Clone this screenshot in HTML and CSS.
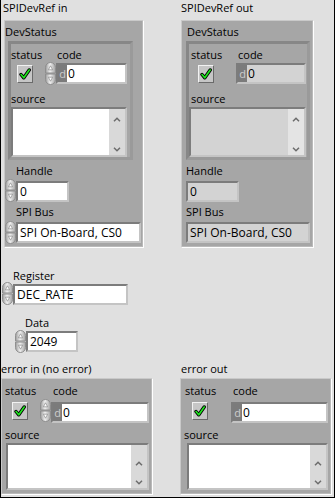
FILE: index.html
```html
<!DOCTYPE html>
<html lang="en">
<head>
    <meta charset="UTF-8">
    <title>SPI Write Register</title>
    <link rel="stylesheet" href="styles.css">
</head>
<body>
    <svg class="defs" width="0" height="0">
        <defs>
            <linearGradient id="spin-grad" x1="0" x2="1" y1="0" y2="0">
                <stop offset="0" stop-color="#9a9a9a"/>
                <stop offset="0.45" stop-color="#f0f0f0"/>
                <stop offset="1" stop-color="#a2a2a2"/>
            </linearGradient>
            <symbol id="spin" viewBox="0 0 11 23">
                <path d="M0.5 11V5.5a5 5 0 0 1 10 0V11z" fill="url(#spin-grad)" stroke="#8e8e8e"/>
                <path d="M0.5 12v5.5a5 5 0 0 0 10 0V12z" fill="url(#spin-grad)" stroke="#8e8e8e"/>
                <path d="M5.5 3.8 7.6 7.8H3.4z" fill="#fff" stroke="#888" stroke-width="0.7"/>
                <path d="M5.5 19.2 7.6 15.2H3.4z" fill="#fff" stroke="#888" stroke-width="0.7"/>
            </symbol>
            <symbol id="check" viewBox="0 0 12 12">
                <polyline points="2,6.5 4.8,9.8 10.2,2" fill="none" stroke="#000" stroke-width="3.4" stroke-linecap="round" stroke-linejoin="round"/>
                <polyline points="2,6.5 4.8,9.8 10.2,2" fill="none" stroke="#1ee81e" stroke-width="1.6" stroke-linecap="round" stroke-linejoin="round"/>
            </symbol>
            <symbol id="chev-up" viewBox="0 0 8 5">
                <polyline points="1,4.2 4,1.2 7,4.2" fill="none" stroke="#6c6c6c" stroke-width="1.5"/>
            </symbol>
            <symbol id="chev-down" viewBox="0 0 8 5">
                <polyline points="1,0.8 4,3.8 7,0.8" fill="none" stroke="#6c6c6c" stroke-width="1.5"/>
            </symbol>
        </defs>
    </svg>

    <div class="top-row">
        <div class="ref-in">
            <div class="lbl">SPIDevRef in</div>
            <div class="cluster">
                <div class="lbl dev-lbl">DevStatus</div>
                <div class="inner">
                    <div class="err-row">
                        <div class="st-col">
                            <div class="lbl">status</div>
                            <div class="st-btn"><svg width="12" height="12"><use href="#check"/></svg></div>
                        </div>
                        <div class="code-col">
                            <div class="lbl">code</div>
                            <div class="num-row">
                                <svg class="spin"><use href="#spin"/></svg>
                                <div class="field num code-field"><span class="radix">d</span>0</div>
                            </div>
                        </div>
                    </div>
                    <div class="lbl src-lbl">source</div>
                    <div class="src">
                        <div class="txt"></div>
                        <div class="sb">
                            <svg width="8" height="5"><use href="#chev-up"/></svg>
                            <svg width="8" height="5"><use href="#chev-down"/></svg>
                        </div>
                    </div>
                </div>
                <div class="lbl sub-lbl handle-lbl">Handle</div>
                <div class="row handle-row">
                    <svg class="spin"><use href="#spin"/></svg>
                    <div class="field handle-field">0</div>
                </div>
                <div class="lbl sub-lbl bus-lbl">SPI Bus</div>
                <div class="row bus-row">
                    <svg class="spin"><use href="#spin"/></svg>
                    <div class="field bus-field">SPI On-Board, CS0</div>
                </div>
            </div>
        </div>

        <div class="ref-out">
            <div class="lbl">SPIDevRef out</div>
            <div class="cluster">
                <div class="lbl dev-lbl">DevStatus</div>
                <div class="inner">
                    <div class="err-row">
                        <div class="st-col">
                            <div class="lbl">status</div>
                            <div class="st-btn"><svg width="12" height="12"><use href="#check"/></svg></div>
                        </div>
                        <div class="code-col">
                            <div class="lbl">code</div>
                            <div class="num-row">
                                <div class="field num ind code-field"><span class="radix">d</span>0</div>
                            </div>
                        </div>
                    </div>
                    <div class="lbl src-lbl">source</div>
                    <div class="src ind">
                        <div class="txt"></div>
                        <div class="sb">
                            <svg width="8" height="5"><use href="#chev-up"/></svg>
                            <svg width="8" height="5"><use href="#chev-down"/></svg>
                        </div>
                    </div>
                </div>
                <div class="lbl sub-lbl handle-lbl">Handle</div>
                <div class="row handle-row">
                    <div class="field ind handle-field">0</div>
                </div>
                <div class="lbl sub-lbl bus-lbl">SPI Bus</div>
                <div class="row bus-row">
                    <div class="field ind bus-field">SPI On-Board, CS0</div>
                </div>
            </div>
        </div>
    </div>

    <div class="lbl reg-lbl">Register</div>
    <div class="row reg-row">
        <svg class="spin"><use href="#spin"/></svg>
        <div class="field reg-field">DEC_RATE</div>
    </div>

    <div class="lbl data-lbl">Data</div>
    <div class="row data-row">
        <svg class="spin"><use href="#spin"/></svg>
        <div class="field data-field">2049</div>
    </div>

    <div class="err-panels">
        <div class="err-in">
            <div class="lbl">error in (no error)</div>
            <div class="cluster errc">
                <div class="err-row">
                    <div class="st-col">
                        <div class="lbl">status</div>
                        <div class="st-btn"><svg width="12" height="12"><use href="#check"/></svg></div>
                    </div>
                    <div class="code-col">
                        <div class="lbl">code</div>
                        <div class="num-row">
                            <svg class="spin"><use href="#spin"/></svg>
                            <div class="field num code-field"><span class="radix">d</span>0</div>
                        </div>
                    </div>
                </div>
                <div class="lbl src-lbl">source</div>
                <div class="src">
                    <div class="txt"></div>
                    <div class="sb">
                        <svg width="8" height="5"><use href="#chev-up"/></svg>
                        <svg width="8" height="5"><use href="#chev-down"/></svg>
                    </div>
                </div>
            </div>
        </div>

        <div class="err-out">
            <div class="lbl">error out</div>
            <div class="cluster errc">
                <div class="err-row">
                    <div class="st-col">
                        <div class="lbl">status</div>
                        <div class="st-btn"><svg width="12" height="12"><use href="#check"/></svg></div>
                    </div>
                    <div class="code-col">
                        <div class="lbl">code</div>
                        <div class="num-row">
                            <div class="field num code-field"><span class="radix">d</span>0</div>
                        </div>
                    </div>
                </div>
                <div class="lbl src-lbl">source</div>
                <div class="src">
                    <div class="txt"></div>
                    <div class="sb">
                        <svg width="8" height="5"><use href="#chev-up"/></svg>
                        <svg width="8" height="5"><use href="#chev-down"/></svg>
                    </div>
                </div>
            </div>
        </div>
    </div>
</body>
</html>
```

FILE: styles.css
```css
* {
    box-sizing: border-box;
}
body {
    margin: 0;
    width: 335px;
    height: 498px;
    overflow: hidden;
    background: #e0e0e0;
    border: 1px solid #000;
    border-top: none;
    font-family: "Open Sans", sans-serif;
    font-size: 11px;
    line-height: 13px;
    color: #000;
}
.defs {
    display: block;
    width: 0;
    height: 0;
}
.lbl {
    height: 13px;
    white-space: nowrap;
}

/* clusters */
.top-row {
    display: flex;
    align-items: flex-start;
    padding-top: 1px;
}
.ref-in {
    margin-left: 2px;
    width: 141px;
}
.ref-out {
    margin-left: 37px;
    width: 133px;
}
.ref-in > .lbl,
.ref-out > .lbl {
    margin-bottom: 6px;
}
.cluster {
    background: #a6a6a6;
    border: 1px solid;
    border-color: #c9c9c9 #fff #fff #c9c9c9;
    box-shadow: inset -1px -1px 0 #bababa;
}
.ref-in .cluster,
.ref-out .cluster {
    height: 228px;
    padding: 4px 0 2px;
}
.ref-in .cluster {
    margin-left: 1px;
    width: 140px;
}
.ref-out .cluster {
    width: 133px;
}
.dev-lbl {
    margin-bottom: 3px;
}
.ref-out .dev-lbl {
    margin-left: 5px;
}
.inner {
    height: 119px;
    padding-top: 4px;
    border: 3px solid;
    border-color: #878787 #9a9a9a #9a9a9a #878787;
}
.ref-in .inner {
    margin-left: 3px;
    width: 125px;
}
.ref-out .inner {
    margin-left: 4px;
    width: 124px;
}

/* status / code */
.err-row {
    display: flex;
    align-items: flex-start;
}
.ref-in .st-col {
    width: 34px;
}
.ref-out .st-col {
    width: 47px;
    padding-left: 2px;
}
.st-btn {
    width: 16px;
    height: 18px;
    margin-top: 4px;
    display: flex;
    align-items: center;
    justify-content: center;
    background: #c6c6c6;
    border: 1px solid;
    border-color: #f2f2f2 #6a6a6a #6a6a6a #f2f2f2;
}
.ref-in .st-btn {
    margin-left: 6px;
}
.ref-out .st-btn {
    margin-left: 7px;
}
.num-row {
    display: flex;
    align-items: flex-start;
    height: 23px;
    margin-top: 1px;
}
.ref-in .code-col .lbl {
    margin-left: 12px;
}
.ref-out .code-col .lbl {
    margin-left: 2px;
}
.spin {
    width: 11px;
    height: 23px;
    flex: none;
}
.field {
    height: 21px;
    margin-top: 1px;
    padding: 0 2px;
    background: #fff;
    border: 2px solid;
    border-color: #7c7c7c #c4c4c4 #c4c4c4 #7c7c7c;
    font-size: 12px;
    line-height: 17px;
    white-space: nowrap;
    overflow: hidden;
}
.field.ind,
.src.ind {
    background: #d3d3d3;
}
.field.num {
    padding-left: 0;
}
.radix {
    display: inline-block;
    width: 9px;
    height: 17px;
    margin-right: 1px;
    background: #7b7b7b;
    color: #cdcdcd;
    font-size: 11px;
    text-align: center;
    vertical-align: top;
}
.ref-in .code-field {
    width: 71px;
}
.ref-out .code-field {
    width: 70px;
}

/* source */
.src-lbl {
    margin-top: 7px;
}
.ref-out .src-lbl {
    margin-left: 2px;
}
.src {
    display: flex;
    height: 50px;
    margin-top: 2px;
    background: #fff;
    border: 2px solid;
    border-color: #7c7c7c #c4c4c4 #c4c4c4 #7c7c7c;
}
.ref-in .src {
    width: 116px;
}
.ref-out .src {
    width: 117px;
}
.src .txt {
    flex: 1;
}
.sb {
    width: 16px;
    display: flex;
    flex-direction: column;
    align-items: center;
    justify-content: space-between;
    padding: 8px 0 3px;
    background: #d9d9d9;
}
.src.ind .sb {
    background: #e4e4e4;
}

/* handle and bus */
.row {
    display: flex;
    align-items: flex-start;
    height: 24px;
}
.handle-lbl {
    margin-top: 4px;
}
.bus-lbl {
    margin-top: 2px;
}
.handle-row,
.bus-row {
    margin-top: 2px;
}
.bus-row {
    margin-top: 3px;
}
.handle-row .field {
    margin-top: 2px;
}
.ref-in .sub-lbl {
    margin-left: 11px;
}
.ref-out .sub-lbl,
.ref-out .row {
    margin-left: 4px;
}
.ref-in .handle-field {
    width: 53px;
}
.ref-out .handle-field {
    width: 53px;
}
.ref-in .bus-field {
    width: 125px;
}
.ref-out .bus-field {
    width: 124px;
}

/* register and data */
.reg-lbl {
    margin: 21px 0 0 12px;
}
.reg-row {
    margin-left: 1px;
}
.reg-row .field {
    width: 115px;
    margin-top: 2px;
}
.data-lbl {
    margin: 10px 0 0 24px;
}
.data-row {
    margin: 1px 0 0 14px;
}
.data-field {
    width: 52px;
}

/* error clusters */
.err-panels {
    display: flex;
    align-items: flex-start;
    margin-top: 8px;
}
.err-in,
.err-out {
    width: 152px;
}
.err-out {
    margin-left: 27px;
}
.err-out > .lbl {
    padding-left: 1px;
}
.err-in > .lbl,
.err-out > .lbl {
    margin-bottom: 3px;
}
.errc {
    height: 117px;
    padding: 5px 0 4px;
}
.errc .st-col .lbl {
    margin-left: 3px;
}
.err-in .st-col {
    width: 38px;
}
.err-out .st-col {
    width: 50px;
}
.err-in .st-col .lbl {
    margin-left: 3px;
}
.err-out .st-col .lbl {
    margin-left: 4px;
}
.errc .st-btn {
    margin-top: 5px;
}
.err-in .st-btn {
    margin-left: 10px;
}
.err-out .st-btn {
    margin-left: 11px;
}
.errc .num-row {
    height: 24px;
    margin-top: 2px;
}
.errc .num-row .field {
    margin-top: 3px;
}
.err-in .code-col .lbl {
    margin-left: 13px;
}
.err-out .code-col .lbl {
    margin-left: 2px;
}
.err-in .code-field {
    width: 98px;
}
.err-out .code-field {
    width: 97px;
}
.errc .src-lbl {
    margin: 5px 0 0 3px;
}
.errc .src {
    height: 47px;
}
.errc .sb {
    padding-top: 16px;
}
.err-in .src {
    margin-left: 4px;
    width: 143px;
}
.err-out .src {
    margin-left: 6px;
    width: 141px;
}
```
